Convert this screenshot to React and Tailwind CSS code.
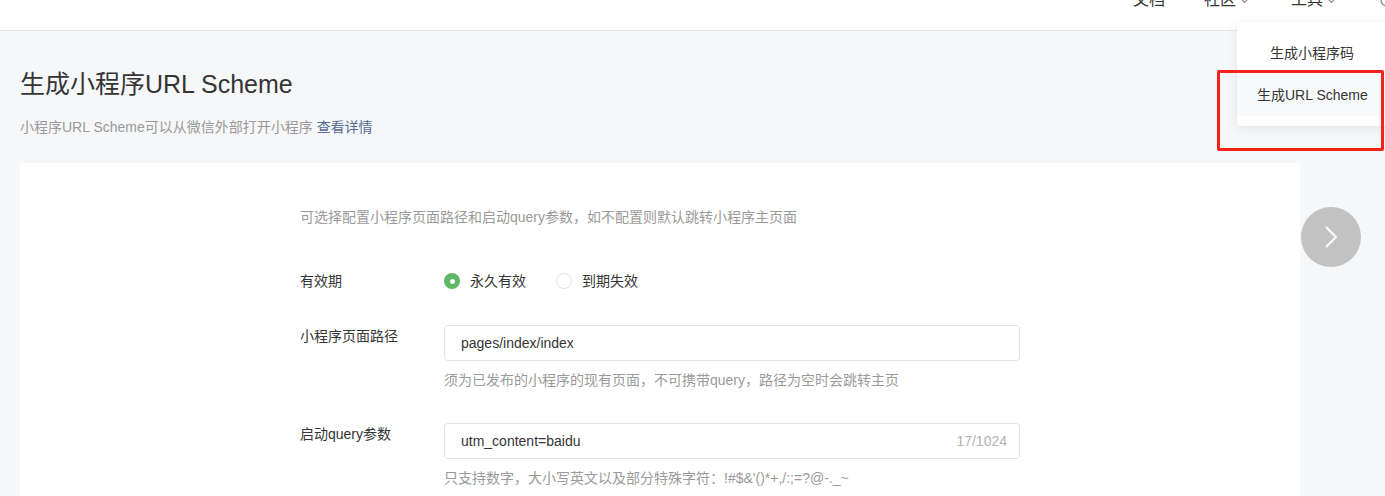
const font = { fontFamily: '"Liberation Sans", "Noto Sans CJK SC", sans-serif' };

function Chevron() {
  return (
    <svg width="11" height="7" viewBox="0 0 11 7" className="ml-[3px]">
      <path d="M1 1l4.5 4.5L10 1" fill="none" stroke="#8c8c8c" strokeWidth="1.2" />
    </svg>
  );
}

function Radio({ checked, label }) {
  return (
    <label className="flex items-center">
      {checked ? (
        <span className="flex h-[16px] w-[16px] items-center justify-center rounded-full bg-[#5fb865]">
          <span className="h-[5px] w-[5px] rounded-full bg-white" />
        </span>
      ) : (
        <span className="h-[16px] w-[16px] rounded-full border border-[#e3e3e3] bg-white" />
      )}
      <span className="ml-[10px] text-[14px] leading-[20px] text-[#353535]">{label}</span>
    </label>
  );
}

export default function App() {
  return (
    <div className="relative h-[496px] overflow-hidden bg-[#f6f7f9]" style={font}>
      {/* top bar */}
      <header className="flex h-[31px] items-start justify-end overflow-hidden border-b border-[#e4e4e4] bg-white">
        <nav className="-mr-[7px] -mt-[11px] flex items-center text-[16px] leading-[22px] text-[#353535]">
          <span>文档</span>
          <span className="ml-[39px] flex items-center">社区<Chevron /></span>
          <span className="ml-[41px] flex items-center">工具<Chevron /></span>
          <svg width="14" height="22" viewBox="0 0 14 22" className="ml-[41px]">
            <circle cx="9" cy="11" r="6" fill="none" stroke="#8c8c8c" strokeWidth="1.3" />
          </svg>
        </nav>
      </header>

      <main className="flex px-[20px]">
        <div className="w-[1280px]">
          <h1 className="mt-[37px] text-[25px] leading-[32px] text-[#353535]">生成小程序URL Scheme</h1>
          <p className="mt-[17px] text-[14px] leading-[20px] text-[#9a9a9a]">
            小程序URL Scheme可以从微信外部打开小程序 <a className="text-[#576b95]">查看详情</a>
          </p>

          <section className="mt-[26px] h-[400px] rounded-[4px] bg-white pl-[280px] pt-[44px]">
            <p className="text-[14px] leading-[20px] text-[#9a9a9a]">
              可选择配置小程序页面路径和启动query参数，如不配置则默认跳转小程序主页面
            </p>

            <div className="mt-[44px] flex items-center">
              <div className="w-[144px] text-[14px] leading-[20px] text-[#353535]">有效期</div>
              <div className="flex items-center gap-[30px]">
                <Radio checked label="永久有效" />
                <Radio label="到期失效" />
              </div>
            </div>

            <div className="mt-[34px] flex">
              <div className="w-[144px] pt-[1px] text-[14px] leading-[20px] text-[#353535]">小程序页面路径</div>
              <div className="w-[576px]">
                <div className="flex h-[36px] items-center rounded-[4px] border border-[#e5e5e5] px-[16px] text-[14px] text-[#353535]">
                  pages/index/index
                </div>
                <p className="mt-[9px] text-[14px] leading-[20px] text-[#9a9a9a]">
                  须为已发布的小程序的现有页面，不可携带query，路径为空时会跳转主页
                </p>
              </div>
            </div>

            <div className="mt-[33px] flex">
              <div className="w-[144px] pt-[1px] text-[14px] leading-[20px] text-[#353535]">启动query参数</div>
              <div className="w-[576px]">
                <div className="flex h-[36px] items-center justify-between rounded-[4px] border border-[#e5e5e5] pl-[16px] pr-[12px] text-[14px]">
                  <span className="text-[#353535]">utm_content=baidu</span>
                  <span className="text-[#b2b2b2]">17/1024</span>
                </div>
                <p className="mt-[9px] text-[14px] leading-[20px] text-[#9a9a9a]">
                  只支持数字，大小写英文以及部分特殊字符：!#$&amp;'()*+,/:;=?@-._~
                </p>
              </div>
            </div>
          </section>
        </div>

        <button className="ml-[1px] mt-[176px] flex h-[60px] w-[60px] shrink-0 items-center justify-center rounded-full bg-[#c2c2c2]">
          <svg width="14" height="24" viewBox="0 0 14 24">
            <path d="M2 2l10 10L2 22" fill="none" stroke="#fff" strokeWidth="2" />
          </svg>
        </button>
      </main>

      {/* tools dropdown */}
      <div className="absolute left-[1237px] top-[22px] w-[160px] rounded-[4px] bg-white py-[10px] shadow-[0_2px_12px_rgba(0,0,0,0.08)]">
        <div className="flex h-[42px] items-center pl-[33px] text-[14px] text-[#353535]">生成小程序码</div>
        <div className="flex h-[42px] items-center bg-[#f8f9fa] pl-[20px] text-[14px] text-[#353535]">生成URL Scheme</div>
      </div>

      {/* annotation */}
      <div className="absolute left-[1217px] top-[70px] h-[81px] w-[167px] rounded-[2px] border-[3px] border-[#f5221c]" />
    </div>
  );
}
